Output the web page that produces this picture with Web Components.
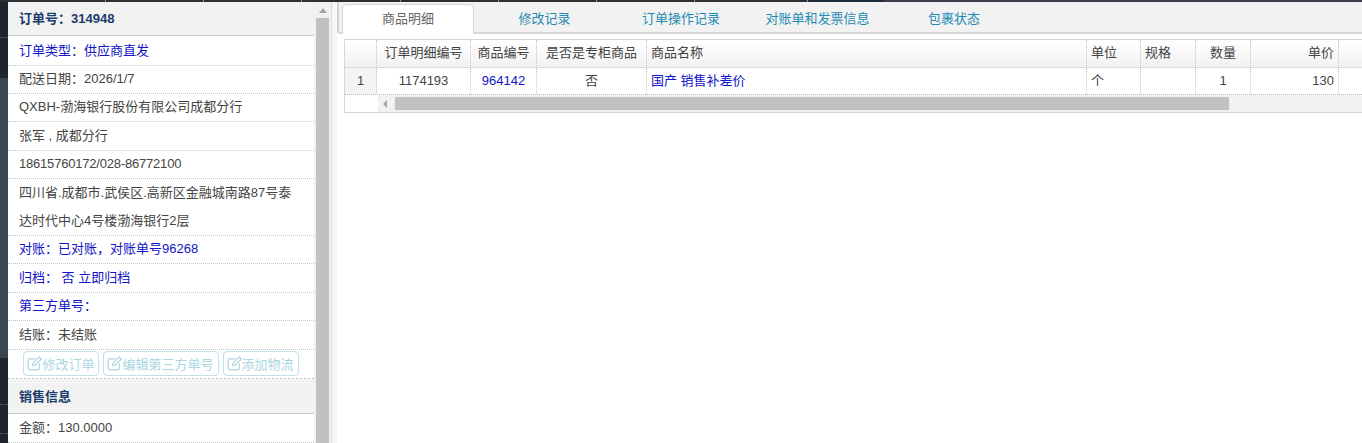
<!DOCTYPE html>
<html lang="zh">
<head>
<meta charset="utf-8">
<title>订单详情</title>
<style>
  html, body { margin: 0; height: 443px; overflow: hidden; background: #fff; }
  body {
    font: 13px "Liberation Sans", "Noto Sans CJK SC", sans-serif;
    color: #444;
    display: flex;
    flex-direction: column;
  }
  .page { display: flex; flex: 1; min-height: 0; }
</style>
</head>
<body>
<top-strip></top-strip>
<div class="page">
  <side-strip></side-strip>
  <order-panel>
    <panel-head>订单号&#xFF1A;314948</panel-head>
    <info-row kind="link" first>订单类型&#xFF1A;供应商直发</info-row>
    <info-row>配送日期&#xFF1A;2026/1/7</info-row>
    <info-row>QXBH-渤海银行股份有限公司成都分行</info-row>
    <info-row>张军 , 成都分行</info-row>
    <info-row tight>18615760172/028-86772100</info-row>
    <info-row>四川省.成都市.武侯区.高新区金融城南路87号泰达时代中心4号楼渤海银行2层</info-row>
    <info-row kind="link">对账&#xFF1A;已对账&#xFF0C;对账单号96268</info-row>
    <info-row kind="link">归档&#xFF1A; 否 立即归档</info-row>
    <info-row kind="link">第三方单号&#xFF1A;</info-row>
    <info-row>结账&#xFF1A;未结账</info-row>
    <action-bar>
      <action-btn>修改订单</action-btn>
      <action-btn>编辑第三方单号</action-btn>
      <action-btn>添加物流</action-btn>
    </action-bar>
    <panel-head>销售信息</panel-head>
    <info-row>金额&#xFF1A;130.0000</info-row>
  </order-panel>
  <main-area>
    <tab-bar>
      <tab-item active>商品明细</tab-item>
      <tab-item>修改记录</tab-item>
      <tab-item>订单操作记录</tab-item>
      <tab-item>对账单和发票信息</tab-item>
      <tab-item>包裹状态</tab-item>
    </tab-bar>
    <data-grid></data-grid>
  </main-area>
</div>
<script>
  function definir(nome, css, html) {
    class Elemento extends HTMLElement {
      constructor() {
        super();
        this.attachShadow({ mode: "open" }).innerHTML = `<style>${css}</style>${html}`;
      }
    }
    customElements.define(nome, Elemento);
  }

  definir("top-strip", `
    :host { display: flex; height: 2px; flex: none; background: #2c3036; }
    i { display: block; height: 2px; width: 98px; flex: none; border-right: 1px solid #8a8f96; box-sizing: border-box; }
    b { display: block; flex: 1; background: #3b3f4c; }
  `, `<i style="width:106px"></i><i></i><i></i><i style="width:99px"></i><i></i><i></i><i></i><i style="width:113px"></i><i style="width:76px;border:0;background:#1e2c3c"></i><b></b>`);

  definir("side-strip", `
    :host { display: flex; flex-direction: column; width: 8px; flex: none; background: #20252b; }
    .a { height: 76px; flex: none; }
    .b { height: 280px; flex: none; background: #394654; }
    .p { height: 36px; flex: none; box-sizing: border-box; border-bottom: 1px dotted #5b6066; }
    .q { height: 47px; flex: none; box-sizing: border-box; border-bottom: 1px dotted #5b6066; }
    .r { height: 29px; flex: none; box-sizing: border-box; border-bottom: 1px dotted #5b6066; }
  `, `<div class="a"><div class="p"></div></div><div class="b"></div><div class="q"></div><div class="r"></div>`);

  definir("order-panel", `
    :host { display: flex; width: 329px; flex: none; overflow: hidden; background: #fff; }
    .corpo { width: 306px; flex: none; }
    .barra { width: 17px; flex: none; background: #f1f1f1; display: flex; flex-direction: column; align-items: center; }
    .seta { width: 0; height: 0; margin: 6px 0 5px; border: 4px solid transparent; border-top: 0; border-bottom: 5px solid #a3a3a3; }
    .polegar { width: 13px; flex: 1; background: #c1c1c1; }
    .fim { width: 6px; flex: none; border-left: 1px solid #dcdcdc; background: #f7f7f7; box-sizing: border-box; }
  `, `<div class="corpo"><slot></slot></div><div class="barra"><div class="seta"></div><div class="polegar"></div></div><div class="fim"></div>`);

  definir("panel-head", `
    :host { display: block; box-sizing: border-box; height: 35px; margin-top: -1px; padding: 1px 11px 0; line-height: 33px;
      background: #f2f2f2; border-bottom: 1px solid #cfcfcf; color: #1c3a6b; font-weight: bold; }
  `, `<slot></slot>`);

  definir("info-row", `
    :host { display: block; padding: 0 20px 0 11px; line-height: 28px; border-bottom: 1px dotted #c4c4c4; margin-bottom: -0.5px; }
    :host([kind="link"]) { color: #1212c8; }
    :host([first]) { line-height: 29px; margin-bottom: -1.5px; }
    :host([tight]) { letter-spacing: -0.2px; }
  `, `<slot></slot>`);

  definir("action-bar", `
    :host { display: flex; justify-content: center; gap: 4px; box-sizing: border-box; height: 31px; padding: 2px 0 0;
      border-bottom: 2px dotted #c4c4c4; }
  `, `<slot></slot>`);

  definir("action-btn", `
    :host { display: flex; align-items: center; box-sizing: border-box; height: 25px; padding: 0 4px 0 3px; flex: none;
      border: 1px solid #c3e0e8; border-radius: 4px; color: #a9d6e3; font-size: 13px; white-space: nowrap; }
    svg { width: 15px; height: 15px; flex: none; }
  `, `<svg viewBox="0 0 14 14" fill="none" stroke="#b9dbe4" stroke-width="1.3"><path d="M7.5 2.5H2.2a1 1 0 0 0-1 1v8.3a1 1 0 0 0 1 1h8.3a1 1 0 0 0 1-1V7"/><path d="M5.2 9 5.6 6.6 11.4 1l2 2-5.8 5.6z"/></svg><slot></slot>`);

  definir("main-area", `
    :host { display: flex; flex-direction: column; flex: 1; min-width: 0; background: #fff; }
  `, `<slot></slot>`);

  definir("tab-bar", `
    :host { display: flex; gap: 4.5px; box-sizing: border-box; height: 32px; padding: 2px 0 0 3px; flex: none;
      background: #f2f2f2; border-left: 2px solid #d4d4d4; border-bottom: 2px solid #d6d6d6; border-bottom-left-radius: 3px; }
  `, `<slot></slot>`);

  definir("tab-item", `
    :host { display: block; box-sizing: border-box; width: 132px; height: 30px; flex: none; text-align: center; line-height: 28px;
      color: #1f8ab5; border: 1px solid transparent; border-bottom: 0; border-radius: 5px 5px 0 0; }
    :host([active]) { background: #fff; color: #666; border-color: #d6d6d6; }
  `, `<slot></slot>`);

  const COLUNAS = [
    ["", "center", 32], ["订单明细编号", "center", 94], ["商品编号", "center", 66],
    ["是否是专柜商品", "center", 110], ["商品名称", "left", 440], ["单位", "left", 54],
    ["规格", "left", 55], ["数量", "center", 55], ["单价", "right", 88], ["", "left", 40]
  ];
  const LINHA = ["1", "1174193", "964142", "否", "国产 销售补差价", "个", "", "1", "130", ""];

  class DataGrid extends HTMLElement {
    constructor() {
      super();
      const raiz = this.attachShadow({ mode: "open" });
      const modelo = COLUNAS.map(c => c[2] + "px").join(" ");
      const cab = COLUNAS.map((c, i) => `<div class="c cab ${i === 9 ? "sem" : ""}" style="text-align:${c[1]}">${c[0]}</div>`).join("");
      const lin = LINHA.map((t, i) => {
        const azul = i === 2 || i === 4 ? "azul" : "";
        const num = i === 0 ? "num" : "";
        const sem = i === 9 ? "sem" : "";
        return `<div class="c lin ${azul} ${num} ${sem}" style="text-align:${COLUNAS[i][1]}">${t}</div>`;
      }).join("");
      raiz.innerHTML = `<style>
        :host { display: block; margin: 5px 0 0 7px; box-sizing: border-box; height: 74px; border: 1px solid #d6d6d6; border-right: 0; overflow: hidden; color: #444; }
        .g { display: grid; grid-template-columns: ${modelo}; grid-template-rows: 28px 26px; border-bottom: 1px dotted #b8b8b8; }
        .c { box-sizing: border-box; padding: 0 4px; border-right: 1px dotted #c4c4c4; white-space: nowrap; overflow: hidden; }
        .sem { border-right: 0; }
        .cab { line-height: 26px; background: linear-gradient(#fff, #f1f1f1); border-bottom: 1px solid #dcdcdc; }
        .lin { line-height: 26px; }
        .num { background: #f4f4f4; }
        .azul { color: #1212c8; }
        .rolagem { display: flex; align-items: center; height: 17px; margin-left: 33px; background: #f1f1f1; }
        .seta { width: 0; height: 0; margin: 0 8px 0 5px; border: 4px solid transparent; border-left: 0; border-right: 4px solid #a3a3a3; }
        .polegar { width: 834px; height: 13px; background: #c1c1c1; }
      </style>
      <div class="g">${cab}${lin}</div>
      <div class="rolagem"><div class="seta"></div><div class="polegar"></div></div>`;
    }
  }
  customElements.define("data-grid", DataGrid);
</script>
</body>
</html>
